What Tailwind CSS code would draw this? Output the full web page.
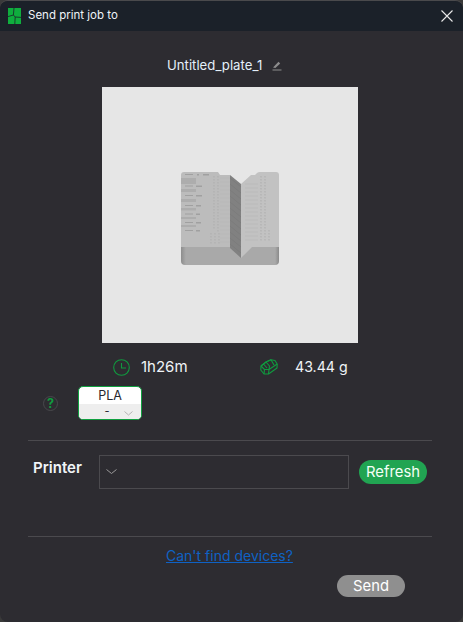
<!doctype html>
<html><head><meta charset="utf-8">
<script src="https://cdn.jsdelivr.net/npm/@tailwindcss/browser@4"></script></head>
<body class="m-0 bg-[#3a3a3a]">
<div class="w-[463px] h-[622px] bg-[#2d2c31] rounded-[8px] overflow-hidden border-t border-[#4a4a4c] font-['Inter','Noto_Sans',sans-serif] text-[#f0f4f8] flex flex-col">
  <div class="h-[30px] bg-[#1b2129] flex items-center pl-2 pr-[10px] shrink-0">
    <svg width="13" height="16" viewBox="0 0 13 16"><rect width="13" height="16" fill="#0fae3e"/><path d="M0 8.6 L5.4 7 L6 0 M6.8 16 L7.2 9 L13 9.4 M5.4 7 L7.2 9" stroke="#1b2129" stroke-width=".8" fill="none"/></svg>
    <span class="ml-[7px] text-[11.5px] leading-none">Send print job to</span>
    <svg class="ml-auto" width="12" height="12" viewBox="0 0 12 12"><path d="M.5 .5 L11.5 11.5 M11.5 .5 L.5 11.5" stroke="#e8e8e8" stroke-width="1.1"/></svg>
  </div>
  <div class="flex flex-col items-start">
    <div class="w-full h-[56px] flex items-center pl-[167px] gap-[10px] pt-[13px]">
      <span class="text-[13.2px] text-[#e4f0fa]">Untitled_plate_1</span>
      <svg width="10" height="10" viewBox="0 0 10 10"><path d="M1 6.5 L6.5 .8 L8.2 2.5 L3.4 7 Z" fill="#8c8c8c"/><path d="M.5 9 H9.5" stroke="#8c8c8c" stroke-width="1.2"/></svg>
    </div>
    <div class="ml-[102px] w-[256px] h-[256px] bg-[#e6e6e6] flex items-center justify-center">
      <svg class="mt-[6px]" width="100" height="97" viewBox="0 0 100 97">
        <defs><linearGradient id="b" x1="0" x2="1" y1="0" y2="0"><stop offset="0" stop-color="#8d8d8d"/><stop offset=".05" stop-color="#a9a9a9"/><stop offset=".96" stop-color="#a9a9a9"/><stop offset="1" stop-color="#8a8a8a"/></linearGradient></defs>
        <path d="M1 77 V72 H99 V77 V91 Q99 95 95 95 H5 Q1 95 1 91 Z" fill="url(#b)"/>
        <path d="M1 5 Q1 2 4 2 H38 L40 5 H50 V78 L50 77 H1 Z" fill="#bcbcbc"/>
        <path d="M61 14 L71 5 H75 L77 3 Q78 2 80 2 H96 Q99 2 99 5 V77 H72 L61 88 Z" fill="#c2c2c2"/>
        <path d="M50 5 L61 14 V88 L50 78 Z" fill="#818181"/>
        <g stroke="#767676" stroke-width=".5"><path d="M50 8 L61 17 M50 14 L61 23 M50 20 L61 29 M50 26 L61 35 M50 32 L61 41 M50 38 L61 47 M50 44 L61 53 M50 50 L61 59 M50 56 L61 65 M50 62 L61 71 M50 68 L61 77 M50 74 L61 83"/></g>
        <g fill="#adadad"><rect x="1" y="8" width="15" height="6"/><rect x="1" y="19" width="15" height="3"/><rect x="1" y="29" width="15" height="3"/><rect x="1" y="38" width="15" height="2.5"/><rect x="1" y="47" width="15" height="2"/><rect x="1" y="55" width="15" height="2"/></g>
        <g fill="#a0a0a0"><rect x="5" y="4" width="8" height="1"/><rect x="17" y="4" width="2" height="1.5"/><rect x="23" y="4" width="6" height="1.5"/><rect x="5" y="15.5" width="8" height="1"/><rect x="16" y="15.5" width="6" height="1.5"/><rect x="5" y="25" width="8" height="1"/><rect x="16" y="25" width="6" height="1.5"/><rect x="5" y="35" width="8" height="1"/><rect x="16" y="35" width="5" height="1.5"/><rect x="5" y="43.5" width="8" height="1"/><rect x="16" y="43.5" width="4" height="1.5"/><rect x="5" y="52" width="8" height="1"/><rect x="16" y="52" width="5" height="1.5"/><rect x="5" y="60" width="8" height="1"/><rect x="16" y="60" width="4" height="1.5"/></g>
        <g stroke="#adadad" stroke-width="1" stroke-dasharray="1.5 1.5"><path d="M34 6 V60 M38 6 V62 M31 63 V74 M35 63 V74 M39 63 V74"/><path d="M81 6 V72 M85 6 V72 M89 60 V72"/></g>
        <g stroke="#b6b6b6" stroke-width=".6"><path d="M40 8 H50 M40 12 H50 M40 16 H50 M40 20 H50 M40 24 H50 M40 28 H50 M40 32 H50 M40 36 H50 M40 40 H50 M40 44 H50 M40 48 H50 M40 52 H50 M40 56 H50 M40 60 H50 M40 64 H50 M40 68 H50 M40 72 H50"/><path d="M65 14 H78 M65 18 H78 M65 22 H78 M65 26 H78 M65 30 H78 M65 34 H78 M65 38 H78 M65 42 H78 M65 46 H78 M65 50 H78 M65 54 H78 M65 58 H78 M65 62 H78 M65 66 H78 M65 70 H78"/></g>
      </svg>
    </div>
    <div class="w-full h-[47px] flex items-center pl-[113px] pt-[1px]">
      <svg width="17" height="17" viewBox="0 0 17 17" fill="none" stroke="#109a3f" stroke-width="1.1"><circle cx="8.5" cy="8.5" r="7.8"/><path d="M8.5 4 V9 H13"/></svg>
      <span class="ml-[11px] text-[15px] w-[119px]">1h26m</span>
      <svg width="18" height="16" viewBox="0 0 18 16" fill="none" stroke="#109a3f" stroke-width="1.1" stroke-linejoin="round"><path d="M6 3 L11 .8 L15 1.5 L17.2 5 L17 9 L8.5 15 L4 15 L.8 11 L1 7 Z"/><path d="M1 7 L4.5 10.5 L4 15 M4.5 10.5 H9 L8.5 15 M9 10.5 L17.2 5 M1 7 L6 3 L9.5 7 L9 10.5 M11 .8 L14 6 M3.5 5 L7 9 M6 3 L11 .8"/></svg>
      <span class="ml-[17px] text-[14.2px]">43.44 g</span>
    </div>
    <div class="w-full flex items-center pl-[43px] h-[34px] -mt-[4px]">
      <svg width="15" height="15" viewBox="0 0 15 15"><circle cx="7.5" cy="7.5" r="7" fill="none" stroke="#48484c" stroke-width="1"/><text x="7.5" y="12" text-anchor="middle" font-size="12.5" font-weight="700" fill="#109a3f" font-family="Inter">?</text></svg>
      <div class="ml-[20px] w-[64px] h-[34px] rounded-[5px] border-[1.5px] border-[#10a040] overflow-hidden bg-white flex flex-col">
        <div class="h-[17px] pt-[2px] flex items-center justify-center text-[12.5px] leading-none text-[#26262e]">PLA</div>
        <div class="flex-1 bg-[#eeeeee] relative flex items-center justify-center text-[#26262e] text-[11px] leading-none pr-[6px]">-
          <svg class="absolute right-[8px] top-[7px]" width="9" height="5" viewBox="0 0 9 5" fill="none" stroke="#b4b4b4"><path d="M0.5 .5 L4.5 4 L8.5 .5"/></svg>
        </div>
      </div>
    </div>
    <div class="mt-[20px] w-[404px] h-px bg-[#4b4a4e] ml-[28px]"></div>
    <div class="w-full flex items-center pl-[33px] mt-[14px] h-[34px]">
      <span class="text-[15px] font-semibold w-[66px] -mt-[8px]">Printer</span>
      <div class="w-[250px] h-[34px] border border-[#4b4a4e] flex items-center pl-[6px]">
        <svg width="11" height="6" viewBox="0 0 11 6" fill="none" stroke="#9a9a9a"><path d="M.5 .5 L5.5 4.5 L10.5 .5"/></svg>
      </div>
      <div class="ml-[10px] w-[68px] h-[24px] rounded-full bg-[#21a452] flex items-center justify-center text-[14.8px] text-[#f4fff6] leading-none">Refresh</div>
    </div>
    <div class="mt-[47px] w-[404px] h-px bg-[#4b4a4e] ml-[28px]"></div>
    <a class="mt-[10px] ml-[166px] text-[14px] leading-[18px] text-[#0f62c4] underline">Can't find devices?</a>
    <div class="w-full flex justify-end pr-[58px] mt-[10px]">
      <div class="w-[68px] h-[22px] rounded-full bg-[#8f8f8f] flex items-center justify-center text-[14.8px] leading-none text-white">Send</div>
    </div>
  </div>
</div>
</body></html>
